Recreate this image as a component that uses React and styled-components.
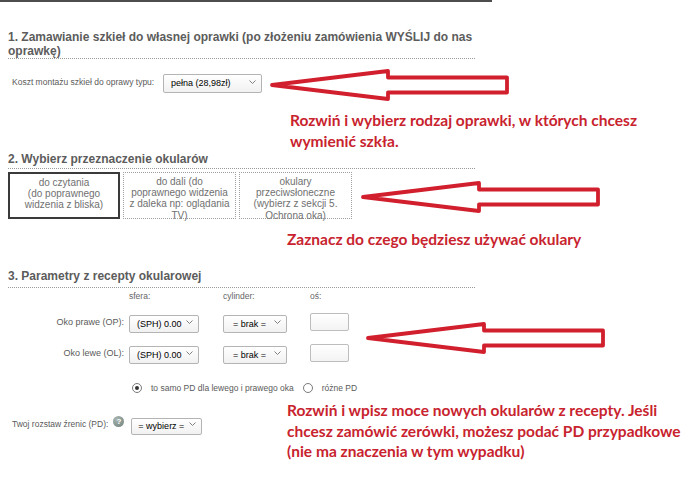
import React from "react";
import styled, { createGlobalStyle } from "styled-components";

const Global = createGlobalStyle`
  html, body { margin: 0; padding: 0; background: #fff; }
  body { font-family: "Liberation Sans", Arial, sans-serif; }
  * { box-sizing: border-box; }
`;

const Page = styled.div`
  position: relative;
  width: 700px;
  height: 486px;
  overflow: hidden;
  background: #fff;
  padding-left: 8px;
`;

const TopRule = styled.div`
  margin-left: -8px;
  width: 492px;
  height: 2px;
  background: #4d4d4d;
`;

const Column = styled.div`
  width: 467px;
`;

const Heading = styled.h2`
  margin: ${(p) => p.$top}px 0 0;
  padding: 0 0 ${(p) => p.$pad ?? 4}px;
  font-family: "Liberation Sans", Arial, sans-serif;
  font-weight: bold;
  font-size: 12px;
  line-height: 14px;
  color: #5c5c5c;
  border-bottom: 1px dotted #9a9a9a;
`;

const FieldRow = styled.div`
  display: flex;
  align-items: center;
  margin-top: 13px;
  height: 19px;
`;

const Label = styled.span`
  font-size: 8.5px;
  color: #5a5a5a;
  white-space: nowrap;
`;

const FrameLabel = styled(Label)`
  flex: 0 0 155px;
  padding-left: 4px;
`;

const SelectWrap = styled.span`
  position: relative;
  display: inline-block;
  width: ${(p) => p.$w}px;
  height: ${(p) => p.$h || 18}px;
`;

const Select = styled.select`
  appearance: none;
  -webkit-appearance: none;
  width: 100%;
  height: 100%;
  margin: 0;
  padding: 0 0 0 ${(p) => p.$pl || 7}px;
  border: 1px solid #b4b4b4;
  border-radius: 2px;
  background: linear-gradient(#ffffff, #f1f1f1);
  font-family: "Liberation Sans", Arial, sans-serif;
  font-size: 9px;
  color: #000;
  outline: none;
`;

const Chevron = styled.svg`
  position: absolute;
  right: 6px;
  top: 50%;
  margin-top: -2px;
  width: 7px;
  height: 4px;
  pointer-events: none;
`;

const Dropdown = ({ w, h, pl, value }) => (
  <SelectWrap $w={w} $h={h}>
    <Select $pl={pl} defaultValue={value}>
      <option>{value}</option>
    </Select>
    <Chevron viewBox="0 0 7 4">
      <polyline points="0.5,0.5 3.5,3.5 6.5,0.5" fill="none" stroke="#808080" strokeWidth="1" />
    </Chevron>
  </SelectWrap>
);

const Note = styled.div`
  margin: ${(p) => p.$top || 0}px 0 0 ${(p) => p.$left}px;
  font-family: Lato, "Open Sans", sans-serif;
  font-weight: 700;
  font-size: 15.5px;
  line-height: ${(p) => p.$lh || 21}px;
  color: #c8232e;
  white-space: nowrap;
`;

const Choices = styled.div`
  display: flex;
  gap: 3px;
  margin-top: 3px;
`;

const Choice = styled.div`
  width: ${(p) => p.$w}px;
  height: 47px;
  padding: 3px 2px 0;
  text-align: center;
  font-size: 10px;
  line-height: 11.2px;
  color: #707070;
  border: ${(p) => (p.$active ? "2px solid #3a3a3a" : "1px dotted #a0a0a0")};
`;

const Grid = styled.div`
  display: grid;
  grid-template-columns: 121px 94px 87px 39px;
  align-items: center;
`;

const HeadRow = styled(Grid)`
  margin-top: 2px;
  height: 12px;
`;

const EyeRow = styled(Grid)`
  margin-top: ${(p) => p.$top}px;
  height: 18px;
`;

const EyeLabel = styled(Label)`
  font-size: 9px;
  text-align: right;
  padding-right: 5px;
`;

const ColHead = styled(Label)`
  font-size: 8.5px;
  color: #666;
`;

const Axis = styled.input`
  width: 39px;
  height: 18px;
  margin: 0;
  border: 1px solid #bdbdbd;
  border-radius: 2px;
  background: linear-gradient(#ffffff, #f3f3f3);
`;

const RadioRow = styled.div`
  display: flex;
  align-items: center;
  height: 12px;
  margin-top: 20px;
  padding-left: 124px;
`;

const Radio = styled.span`
  position: relative;
  flex: 0 0 10px;
  width: 10px;
  height: 10px;
  border: 1px solid #7a7a7a;
  border-radius: 50%;
  background: #fff;
  margin-right: 9px;
  &::after {
    content: "";
    display: ${(p) => (p.$checked ? "block" : "none")};
    position: absolute;
    left: 2px;
    top: 2px;
    width: 4px;
    height: 4px;
    border-radius: 50%;
    background: #333;
  }
`;

const RadioText = styled(Label)`
  margin-right: ${(p) => p.$mr || 0}px;
`;

const PdArea = styled.div`
  display: flex;
  align-items: flex-start;
  margin-top: 6px;
`;

const PdField = styled.div`
  flex: 0 0 279px;
  display: flex;
  align-items: center;
  padding-top: 15px;
  padding-left: 4px;
`;

const Help = styled.span`
  display: inline-flex;
  align-items: center;
  justify-content: center;
  width: 11px;
  height: 11px;
  margin: -4px 7px 0 5px;
  border-radius: 50%;
  background: radial-gradient(circle at 35% 30%, #a8b5b0, #6f807a);
  color: #fff;
  font-size: 8px;
  font-weight: bold;
  line-height: 1;
`;

const ArrowSvg = styled.svg`
  position: absolute;
  left: ${(p) => p.$x - 2}px;
  top: ${(p) => p.$y - 16}px;
  width: 240px;
  height: 32px;
  overflow: visible;
`;

const Arrow = ({ x, y }) => (
  <ArrowSvg $x={x} $y={y} viewBox="0 0 240 32">
    <polygon
      points="2,16 118,2 118,8.5 237,8.5 237,23.5 118,23.5 118,30"
      fill="none"
      stroke="#d11f2d"
      strokeWidth="3.8"
      strokeLinejoin="round"
    />
  </ArrowSvg>
);

export default function App() {
  return (
    <>
      <Global />
      <Page>
        <TopRule />
        <Column>
          <Heading $top={28} $pad={0}>
            1. Zamawianie szkieł do własnej oprawki (po złożeniu zamówienia WYŚLIJ do nas oprawkę)
          </Heading>
          <FieldRow>
            <FrameLabel>Koszt montażu szkieł do oprawy typu:</FrameLabel>
            <Dropdown w={99} h={19} pl={7} value="pełna (28,98zł)" />
          </FieldRow>
        </Column>
        <Note $top={19} $left={282}>
          Rozwiń i wybierz rodzaj oprawki, w których chcesz
          <br />
          wymienić szkła.
        </Note>

        <Column>
          <Heading $top={0} $pad={2}>2. Wybierz przeznaczenie okularów</Heading>
          <Choices>
            <Choice $w={112} $active>
              do czytania
              <br />
              (do poprawnego
              <br />
              widzenia z bliska)
            </Choice>
            <Choice $w={113}>
              do dali (do
              <br />
              poprawnego widzenia
              <br />z daleka np: oglądania
              <br />
              TV)
            </Choice>
            <Choice $w={113}>
              okulary
              <br />
              przeciwsłoneczne
              <br />
              (wybierz z sekcji 5.
              <br />
              Ochrona oka)
            </Choice>
          </Choices>
        </Column>
        <Note $top={10} $left={279}>
          Zaznacz do czego będziesz używać okulary
        </Note>

        <Column>
          <Heading $top={19} $pad={4}>3. Parametry z recepty okularowej</Heading>
          <HeadRow>
            <span />
            <ColHead>sfera:</ColHead>
            <ColHead>cylinder:</ColHead>
            <ColHead>oś:</ColHead>
          </HeadRow>
          <EyeRow $top={11}>
            <EyeLabel>Oko prawe (OP):</EyeLabel>
            <Dropdown w={70} pl={7} value="(SPH) 0.00" />
            <Dropdown w={64} pl={9} value="= brak =" />
            <Axis type="text" />
          </EyeRow>
          <EyeRow $top={13}>
            <EyeLabel>Oko lewe (OL):</EyeLabel>
            <Dropdown w={70} pl={7} value="(SPH) 0.00" />
            <Dropdown w={64} pl={9} value="= brak =" />
            <Axis type="text" />
          </EyeRow>
          <RadioRow>
            <Radio $checked />
            <RadioText $mr={9}>to samo PD dla lewego i prawego oka</RadioText>
            <Radio />
            <RadioText>różne PD</RadioText>
          </RadioRow>
        </Column>
        <PdArea>
          <PdField>
            <Label>Twoj rozstaw źrenic (PD):</Label>
            <Help>?</Help>
            <Dropdown w={71} h={17} pl={6} value="= wybierz =" />
          </PdField>
          <Note $left={0} $lh={20.5}>
            Rozwiń i wpisz moce nowych okularów z recepty. Jeśli
            <br />
            chcesz zamówić zerówki, możesz podać PD przypadkowe
            <br />
            (nie ma znaczenia w tym wypadku)
          </Note>
        </PdArea>

        <Arrow x={272} y={85} />
        <Arrow x={363} y={197} />
        <Arrow x={368} y={338} />
      </Page>
    </>
  );
}
